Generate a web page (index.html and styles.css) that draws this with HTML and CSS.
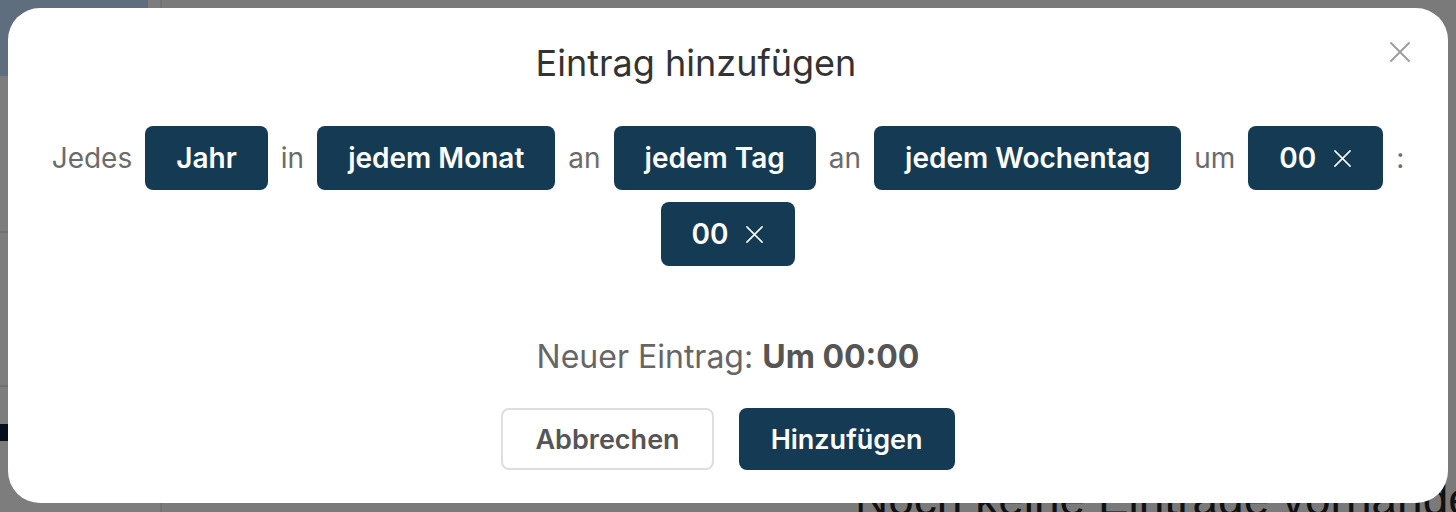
FILE: index.html
```html
<!DOCTYPE html>
<html lang="de">
<head>
<meta charset="utf-8">
<title>Eintrag hinzufügen</title>
<link rel="stylesheet" href="styles.css">
</head>
<body>
<div class="app">
  <aside class="sidebar">
    <div class="sidebar-head"></div>
    <div class="sidebar-sec sec-1"></div>
    <div class="sidebar-sec sec-2"></div>
    <div class="sidebar-item"></div>
  </aside>
  <main class="main">
    <p class="empty">Noch keine Einträge vorhanden</p>
  </main>
</div>
<div class="overlay"></div>
<div class="modal" role="dialog">
  <div class="head">
    <h2 class="title">Eintrag hinzufügen</h2>
    <button class="close" aria-label="Schließen">
      <svg viewBox="0 0 20 20" width="20" height="20"><path d="M1 1 L19 19 M19 1 L1 19" stroke="#9a9a9a" stroke-width="1.8" fill="none" stroke-linecap="round"/></svg>
    </button>
  </div>
  <div class="rule">
    <span class="word">Jedes</span>
    <button class="chip">Jahr</button>
    <span class="word">in</span>
    <button class="chip">jedem Monat</button>
    <span class="word">an</span>
    <button class="chip">jedem Tag</button>
    <span class="word">an</span>
    <button class="chip">jedem Wochentag</button>
    <span class="word">um</span>
    <button class="chip"><span>00</span><svg class="x" viewBox="0 0 20 20" width="20" height="20"><path d="M2 2 L18 18 M18 2 L2 18" stroke="#fff" stroke-width="1.6" fill="none" stroke-linecap="round"/></svg></button>
    <span class="word">:</span>
    <button class="chip"><span>00</span><svg class="x" viewBox="0 0 20 20" width="20" height="20"><path d="M2 2 L18 18 M18 2 L2 18" stroke="#fff" stroke-width="1.6" fill="none" stroke-linecap="round"/></svg></button>
  </div>
  <p class="summary">Neuer Eintrag: <strong>Um 00:00</strong></p>
  <div class="actions">
    <button class="btn btn-secondary">Abbrechen</button>
    <button class="btn btn-primary">Hinzufügen</button>
  </div>
</div>
</body>
</html>
```

FILE: styles.css
```css
* { box-sizing: border-box; }

html, body {
  margin: 0;
  height: 100%;
  overflow: hidden;
}

body {
  font-family: "Inter", "Noto Sans", sans-serif;
  background: #f4f4f4;
}

.app {
  display: flex;
  height: 512px;
}

.sidebar {
  width: 162px;
  flex: none;
  background: #fbfbfb;
  border-right: 2px solid #e4e4e4;
  display: flex;
  flex-direction: column;
}

.sidebar-head {
  width: 148px;
  height: 76px;
  background: #bcdcfe;
}

.sidebar-sec {
  border-bottom: 2px solid #e0e0e0;
}

.sec-1 { height: 157px; }
.sec-2 { height: 154px; }

.sidebar-item {
  margin-top: 37px;
  width: 14px;
  height: 17px;
  background: #0a1f3a;
}

.main {
  flex: 1;
  padding-top: 472px;
}

.empty {
  margin: 0 0 0 693px;
  font-family: "Liberation Sans", Arial, sans-serif;
  font-size: 46px;
  line-height: 54px;
  color: #222;
  white-space: nowrap;
}

.overlay {
  position: fixed;
  inset: 0;
  background: rgba(0, 0, 0, 0.5);
}

.modal {
  position: fixed;
  top: 8px;
  left: 8px;
  right: 8px;
  background: #fff;
  border-radius: 32px;
  padding: 33px 32px 33px;
  text-align: center;
}

.head {
  display: flex;
  align-items: flex-start;
}

.title {
  flex: 1;
  margin: 0;
  padding-right: 64px;
  font-size: 36px;
  line-height: 44px;
  font-weight: 400;
  color: #333;
}

.close {
  position: absolute;
  top: 34px;
  right: 38px;
  width: 20px;
  height: 20px;
  padding: 0;
  border: 0;
  background: none;
  display: flex;
}

.rule {
  margin-top: 41px;
  display: flex;
  flex-wrap: wrap;
  justify-content: center;
  align-items: center;
  column-gap: 13px;
  row-gap: 12px;
}

.word {
  font-size: 28px;
  line-height: 36px;
  color: #6b6b6b;
}

.chip {
  height: 64px;
  padding: 0 31px;
  border: 0;
  border-radius: 8px;
  background: #143b53;
  color: #fff;
  font-family: "Inter", sans-serif;
  font-size: 28px;
  font-weight: 600;
  display: inline-flex;
  align-items: center;
  gap: 17px;
}

.chip .x {
  width: 19px;
  height: 19px;
}

.summary {
  margin: 71px 0 0;
  font-size: 32px;
  line-height: 40px;
  color: #666;
}

.summary strong {
  font-weight: 700;
  color: #555;
}

.actions {
  margin-top: 31px;
  display: flex;
  justify-content: center;
  gap: 25px;
}

.btn {
  height: 62px;
  padding: 0 32px;
  border-radius: 8px;
  font-family: "Inter", sans-serif;
  font-size: 27px;
  font-weight: 600;
}

.btn-secondary {
  background: #fff;
  border: 2px solid #dedede;
  color: #555;
}

.btn-primary {
  background: #143b53;
  border: 0;
  color: #fff;
}
```
